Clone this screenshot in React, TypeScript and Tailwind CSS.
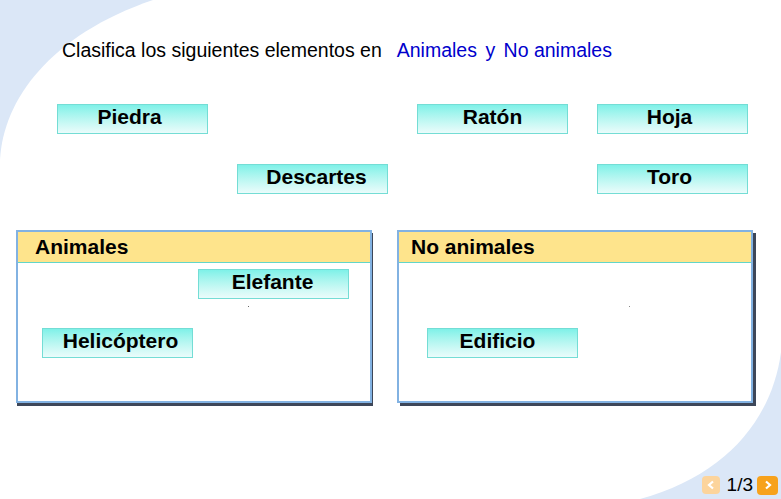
import React from "react";

interface Item {
  label: string;
  left: number;
  top: number;
  dx: number;
}

const items: Item[] = [
  { label: "Piedra", left: 57, top: 104, dx: -3 },
  { label: "Ratón", left: 417, top: 104, dx: 0 },
  { label: "Hoja", left: 597, top: 104, dx: -3 },
  { label: "Descartes", left: 237, top: 164, dx: 4 },
  { label: "Toro", left: 597, top: 164, dx: -3 },
  { label: "Elefante", left: 198, top: 269, dx: -1 },
  { label: "Helicóptero", left: 42, top: 328, dx: 3 },
  { label: "Edificio", left: 427, top: 328, dx: -5 },
];

function Card({ item }: { item: Item }) {
  return (
    <div
      className="absolute w-[151px] h-[30px] border border-[#74ddd5] bg-gradient-to-b from-[#7ef1e8] to-[#eafcfb] text-center text-[21px] leading-[24px] font-bold text-black"
      style={{ left: item.left, top: item.top }}
    >
      <span className="relative" style={{ left: item.dx }}>
        {item.label}
      </span>
    </div>
  );
}

function Panel({ title, shadow, pad }: { title: string; shadow: string; pad: string }) {
  return (
    <div className={`w-[356px] h-[173px] bg-white border-2 border-[#82b2e2] ${shadow}`}>
      <div className={`h-[31px] bg-[#fee48c] border-b border-[#62d6c9] ${pad} text-[21px] leading-[29px] font-bold text-black`}>
        {title}
      </div>
    </div>
  );
}

export default function App() {
  return (
    <div className="relative w-[781px] h-[499px] overflow-hidden bg-[#dbe7f7] flex flex-col font-['Liberation_Sans',Arial,sans-serif]">
      {/* fondo */}
      <svg className="absolute inset-0" width="781" height="499" viewBox="0 0 781 499">
        <path
          d="M153,0 L781,0 L781,352 C772,420 725,476 640,499 L0,499 L0,160 C3,100 50,35 153,0 Z"
          fill="#ffffff"
        />
      </svg>

      <div className="relative pt-[39px] pl-[62px] text-[19.5px] leading-[22px] text-black">
        Clasifica los siguientes elementos en
        <span className="ml-[15px] text-[#0000cc]">
          Animales <span className="mx-[3px]">y</span> No animales
        </span>
      </div>

      <div className="relative mt-[169px] ml-[16px] flex gap-[25px]">
        <Panel title="Animales" pad="pl-[17px]" shadow="shadow-[1px_3px_0_#3d4759]" />
        <Panel title="No animales" pad="pl-[12px]" shadow="shadow-[3px_3px_0_#3d4759]" />
      </div>

      {/* paginacion */}
      <div className="relative mt-auto pr-[3px] pb-[4px] flex justify-end items-center">
        <div className="w-[18px] h-[18px] rounded-[4px] bg-[#fcd49c] flex items-center justify-center">
          <svg width="10" height="10" viewBox="0 0 10 10">
            <path d="M7 1.5 L3 5 L7 8.5" stroke="#fff" strokeWidth="2.2" fill="none" />
          </svg>
        </div>
        <span className="ml-[7px] mr-[4px] text-[19px] leading-[20px] text-black">1/3</span>
        <div className="w-[21px] h-[19px] rounded-[4px] bg-[#f7a21c] flex items-center justify-center">
          <svg width="10" height="10" viewBox="0 0 10 10">
            <path d="M3 1.5 L7 5 L3 8.5" stroke="#fff" strokeWidth="2.2" fill="none" />
          </svg>
        </div>
      </div>

      {items.map((item) => (
        <Card key={item.label} item={item} />
      ))}

      <span className="absolute left-[248px] top-[306px] w-px h-px bg-[#666]" />
      <span className="absolute left-[629px] top-[306px] w-px h-px bg-[#888]" />
    </div>
  );
}
